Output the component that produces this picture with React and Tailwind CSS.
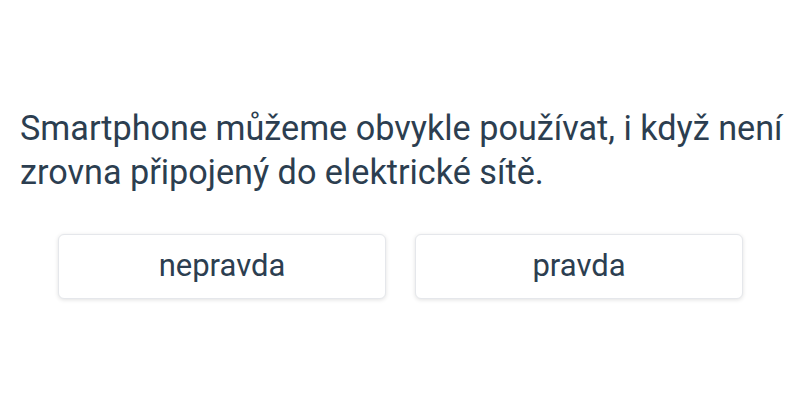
import React from 'react';

const odpovedi = ['nepravda', 'pravda'];

const App = () => {
    return (
        <div className="h-[400px] w-[800px] bg-white flex flex-col justify-center pl-5 pr-3 text-[#2c3e50]" style={{ fontFamily: 'Roboto, "Noto Sans", sans-serif' }}>
            <p className="text-[34.2px] leading-[44px] pt-1">
                Smartphone můžeme obvykle používat, i když není zrovna připojený do elektrické sítě.
            </p>
            <div className="flex justify-center gap-[29px] mt-[40px] pr-[7px]">
                {odpovedi.map(o => (
                    <button key={o} className="w-[328px] h-[65px] bg-white rounded-md border border-gray-200 shadow-[0_1px_4px_rgba(0,0,0,0.12)] text-[31px]">
                        {o}
                    </button>
                ))}
            </div>
        </div>
    );
};

export default App;
